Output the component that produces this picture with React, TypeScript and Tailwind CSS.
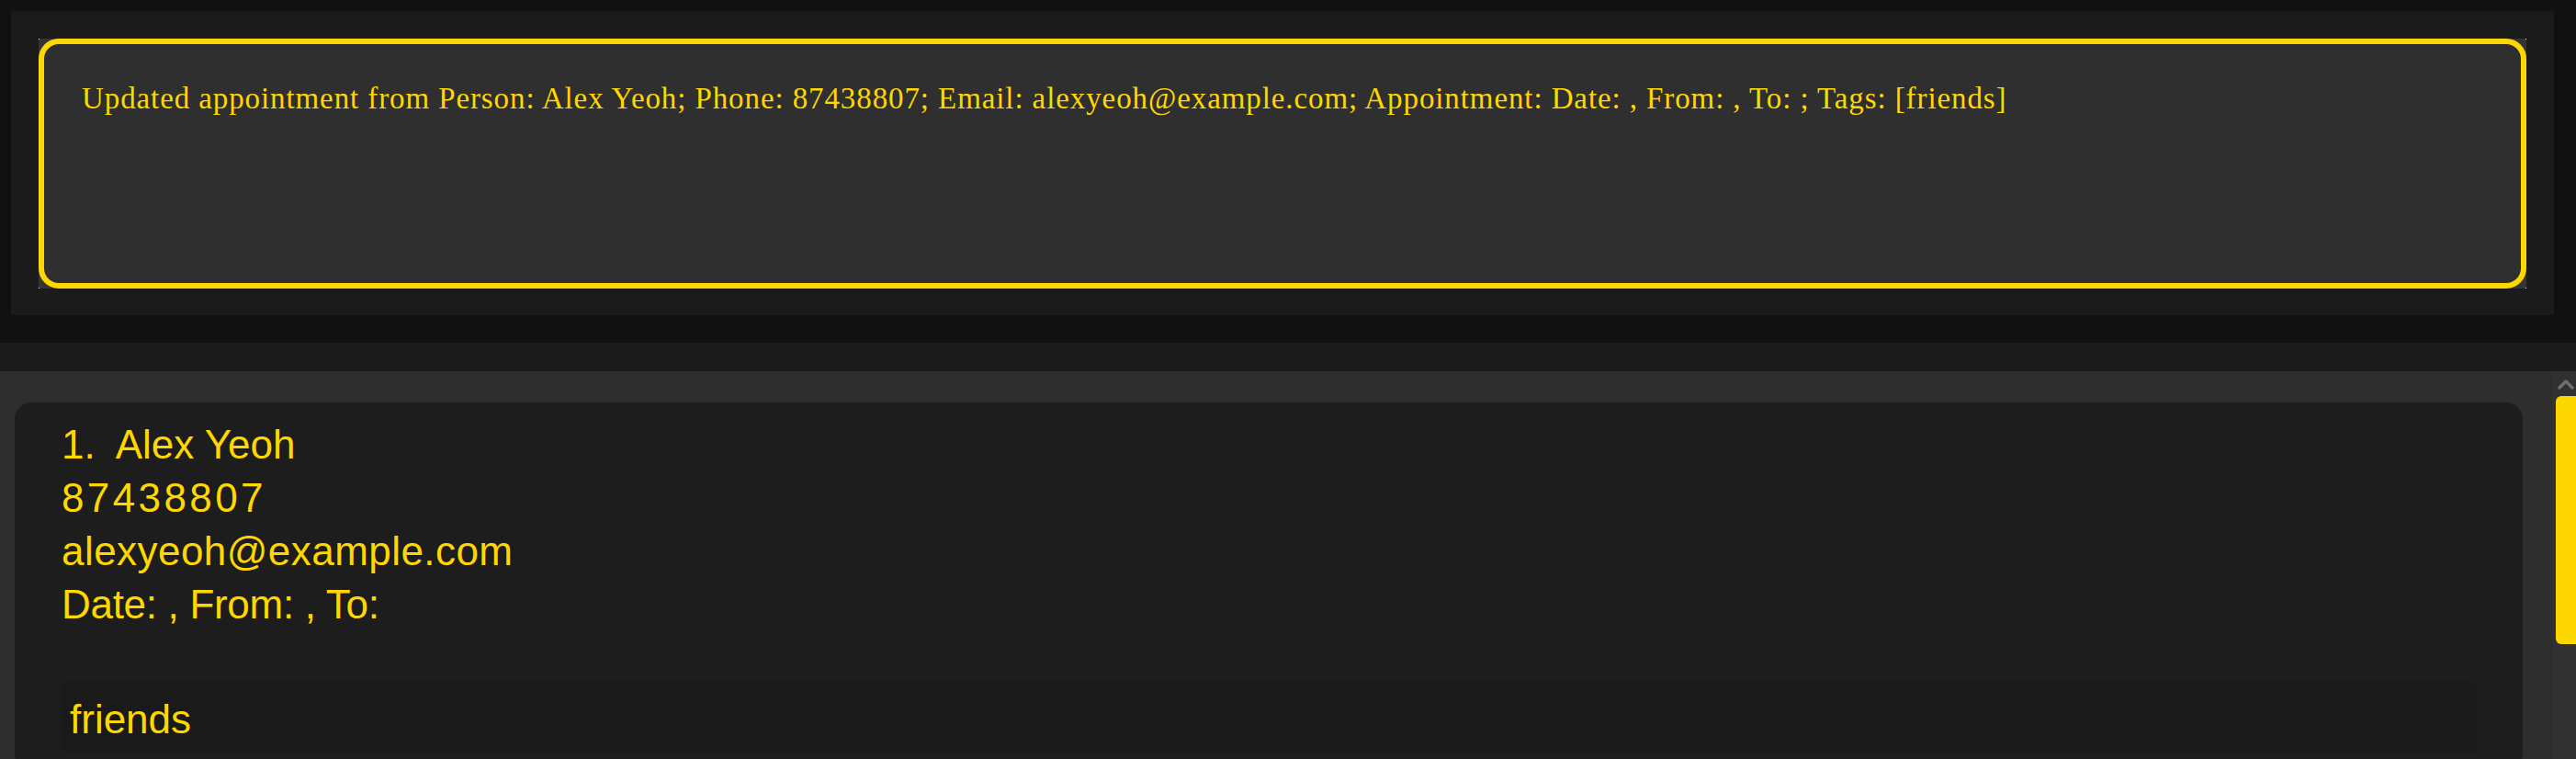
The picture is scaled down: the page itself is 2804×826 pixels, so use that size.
import React from "react";

export default function App() {
  const serif = { fontFamily: '"Liberation Serif", "Times New Roman", serif' };
  const sans = { fontFamily: '"Liberation Sans", Arial, sans-serif' };
  return (
    <div className="w-[2804px] h-[826px] overflow-hidden bg-[#111111] flex flex-col">
      <div className="pt-[12px] pl-[12px] pr-[24px] pb-[30px]">
        <div className="h-[331px] bg-[#1b1b1b] rounded-[4px] pt-[30px] pl-[30px] pr-[30px] pb-[29px]">
          <div className="relative h-[272px] bg-[#343434]">
            <div className="absolute left-0 top-0 w-[1px] h-[1px] bg-[#dddddd]" />
            <div className="absolute right-0 top-0 w-[1px] h-[1px] bg-[#dddddd]" />
            <div className="absolute left-0 bottom-0 w-[1px] h-[1px] bg-[#dddddd]" />
            <div className="absolute right-0 bottom-0 w-[1px] h-[1px] bg-[#dddddd]" />
            <div className="h-full border-[6px] border-[#ffd700] rounded-[22px] bg-[#2f2f2f] pl-[41px] pt-[41px]">
              <div
                className="text-[33px] leading-[36px] text-[#ffd700] whitespace-nowrap tracking-[0.9px]"
                style={serif}
              >
                Updated appointment from Person: Alex Yeoh; Phone: 87438807; Email: alexyeoh@example.com; Appointment: Date: , From: , To: ; Tags: [friends]
              </div>
            </div>
          </div>
        </div>
      </div>
      <div className="h-[31px] bg-[#1b1b1b] shrink-0" />
      <div className="flex-1 flex bg-[#2e2e2e] min-h-0">
        <div className="flex-1 pl-[16px] pt-[34px] pr-[32px] min-w-0">
          <div className="bg-[#1d1d1d] rounded-[18px] pl-[51px] pr-[50px] pt-[17px] pb-[20px] text-[#ffd700]" style={sans}>
            <div className="text-[44px] leading-[58px] whitespace-pre">1.  Alex Yeoh</div>
            <div className="text-[44px] leading-[58px] tracking-[3.4px]">87438807</div>
            <div className="text-[44px] leading-[58px] tracking-[0.45px]">alexyeoh@example.com</div>
            <div className="text-[44px] leading-[58px] tracking-[-0.3px]">Date: , From: , To:</div>
            <div className="mt-[55px] bg-[#1a1a1a] rounded-[8px] pl-[9px] pt-[12px] pb-[7px]">
              <div className="text-[44px] leading-[58px]">friends</div>
            </div>
          </div>
        </div>
        <div className="w-[26px] bg-[#313131] flex flex-col items-end">
          <div className="w-full flex justify-end pr-[1px] pt-[7px] h-[27px]">
            <svg width="20" height="14" viewBox="0 0 20 14">
              <path d="M3 11 L10 4 L17 11" stroke="#6e6e6e" strokeWidth="3.5" fill="none" strokeLinecap="round" strokeLinejoin="round" />
            </svg>
          </div>
          <div className="w-[22px] h-[270px] bg-[#ffd700] rounded-l-[6px]" />
        </div>
      </div>
    </div>
  );
}
